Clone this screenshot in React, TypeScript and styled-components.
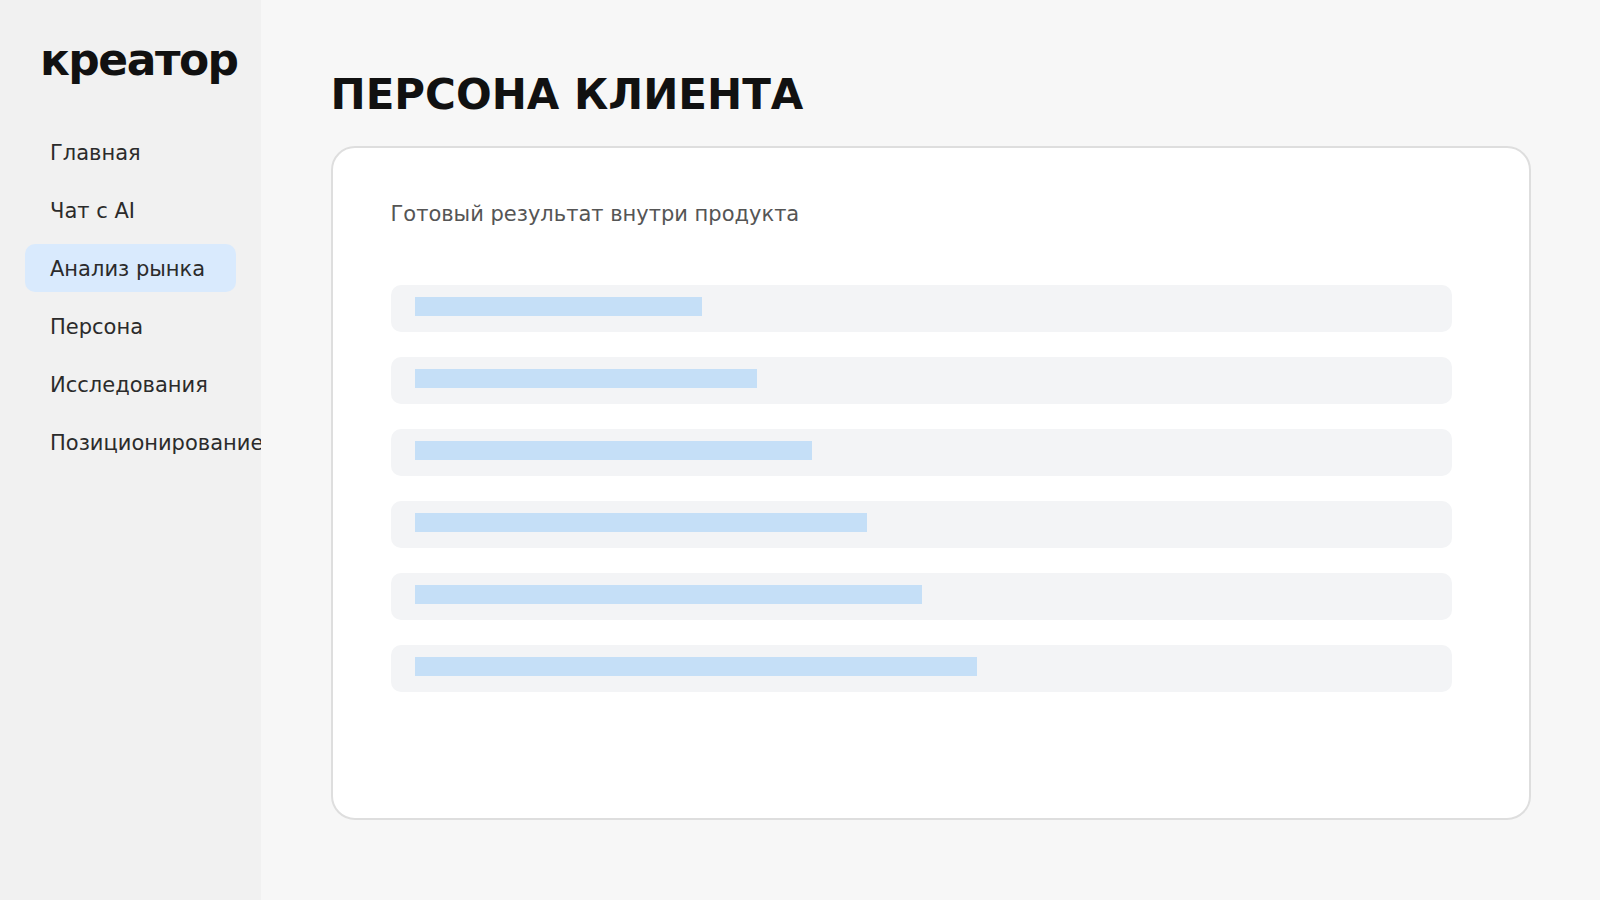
import styled, { createGlobalStyle } from 'styled-components';

const GlobalStyle = createGlobalStyle`
  html, body {
    margin: 0;
    padding: 0;
  }

  body {
    font-family: "DejaVu Sans", "Noto Sans", sans-serif;
    background: #f7f7f7;
  }

  * {
    box-sizing: border-box;
  }
`;

const Layout = styled.div`
  display: flex;
  min-height: 100vh;
`;

const Sidebar = styled.aside`
  width: 261px;
  flex-shrink: 0;
  background: #f1f1f1;
  padding: 34px 25px;
  overflow: hidden;
`;

const Logo = styled.div`
  padding-left: 15px;
  margin-bottom: 42px;
  font-size: 44px;
  line-height: 52px;
  font-weight: 700;
  letter-spacing: -1.5px;
  color: #111;
`;

const Nav = styled.nav`
  display: flex;
  flex-direction: column;
  gap: 10px;
`;

const NavItem = styled.div<{ $active?: boolean }>`
  padding: 13px 24px 11px 25px;
  border-radius: 10px;
  font-size: 21px;
  line-height: 24px;
  color: #2b2b2b;
  white-space: nowrap;
  background: ${({ $active }) => ($active ? '#d9eafd' : 'transparent')};
`;

const Main = styled.main`
  flex: 1;
  padding: 70px 0;
`;

const Container = styled.div`
  max-width: 1200px;
  margin: 0 auto;
`;

const Title = styled.h1`
  margin: 0 0 26px;
  font-size: 42px;
  line-height: 50px;
  font-weight: 700;
  color: #111;
`;

const Card = styled.section`
  height: 674px;
  padding: 54px 77px 0 58px;
  background: #fff;
  border: 2px solid #dedede;
  border-radius: 24px;
`;

const Subtitle = styled.p`
  margin: 0 0 59px;
  font-size: 21px;
  line-height: 24px;
  color: #555;
`;

const Rows = styled.div`
  display: flex;
  flex-direction: column;
  gap: 25px;
`;

const Row = styled.div`
  padding: 12px 24px 16px;
  background: #f3f4f6;
  border-radius: 10px;
`;

const Bar = styled.div`
  height: 19px;
  background: #c5dff7;
`;

const navItems = ['Главная', 'Чат с AI', 'Анализ рынка', 'Персона', 'Исследования', 'Позиционирование'];

const barWidths = [287, 342, 397, 452, 507, 562];

export default function App() {
    return (
        <>
            <GlobalStyle />
            <Layout>
                <Sidebar>
                    <Logo>креатор</Logo>
                    <Nav>
                        {navItems.map((item) => (
                            <NavItem key={item} $active={item === 'Анализ рынка'}>
                                {item}
                            </NavItem>
                        ))}
                    </Nav>
                </Sidebar>

                <Main>
                    <Container>
                        <Title>ПЕРСОНА КЛИЕНТА</Title>
                        <Card>
                            <Subtitle>Готовый результат внутри продукта</Subtitle>
                            <Rows>
                                {barWidths.map((width) => (
                                    <Row key={width}>
                                        <Bar style={{ width }} />
                                    </Row>
                                ))}
                            </Rows>
                        </Card>
                    </Container>
                </Main>
            </Layout>
        </>
    );
}
